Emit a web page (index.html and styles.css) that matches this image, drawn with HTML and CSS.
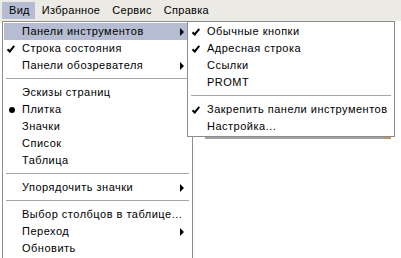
FILE: index.html
```html
<!DOCTYPE html>
<html lang="ru">
<head>
    <meta charset="UTF-8">
    <title>Вид</title>
    <link rel="stylesheet" href="styles.css">
</head>
<body>
    <div id="menubar">
        <span class="top-item active">Вид</span>
        <span class="top-item">Избранное</span>
        <span class="top-item">Сервис</span>
        <span class="top-item">Справка</span>
    </div>

    <div id="content">
        <div class="toolbar-edge"><span class="grip"></span></div>
    </div>

    <div class="menu" id="viewMenu">
        <div class="item hover">Панели инструментов<span class="arrow"></span></div>
        <div class="item"><span class="check"></span>Строка состояния</div>
        <div class="item">Панели обозревателя<span class="arrow"></span></div>
        <div class="sep"></div>
        <div class="item">Эскизы страниц</div>
        <div class="item"><span class="dot"></span>Плитка</div>
        <div class="item">Значки</div>
        <div class="item">Список</div>
        <div class="item">Таблица</div>
        <div class="sep"></div>
        <div class="item">Упорядочить значки<span class="arrow"></span></div>
        <div class="sep"></div>
        <div class="item">Выбор столбцов в таблице...</div>
        <div class="item">Переход<span class="arrow"></span></div>
        <div class="item">Обновить</div>
    </div>

    <div class="menu" id="toolbarsMenu">
        <div class="item"><span class="check"></span>Обычные кнопки</div>
        <div class="item"><span class="check"></span>Адресная строка</div>
        <div class="item">Ссылки</div>
        <div class="item">PROMT</div>
        <div class="sep"></div>
        <div class="item"><span class="check"></span>Закрепить панели инструментов</div>
        <div class="item">Настройка...</div>
    </div>
</body>
</html>
```

FILE: styles.css
```css
body {
    margin: 0;
    background-color: #ffffff;
    font-family: Tahoma, "Liberation Sans", Arial, sans-serif;
    font-size: 11px;
    letter-spacing: 0.5px;
    color: #000;
    width: 401px;
    height: 258px;
    overflow: hidden;
    position: relative;
}
#menubar {
    height: 21px;
    background-color: #ebeae4;
    display: flex;
    align-items: flex-start;
    padding-left: 2px;
    box-sizing: border-box;
    letter-spacing: 0.3px;
}
.top-item {
    height: 17px;
    line-height: 17px;
    margin-top: 2px;
    padding: 0 5px 0 7px;
}
.top-item.active {
    background-color: #b6bdd2;
}
#content {
    padding-top: 116px;
    padding-left: 205px;
}
.toolbar-edge {
    width: 180px;
    height: 2px;
    background-color: #a0a0a0;
    position: relative;
}
.grip {
    position: absolute;
    left: 180px;
    top: 0;
    width: 6px;
    height: 2px;
    background-color: #b0a060;
}
.menu {
    position: absolute;
    background-color: #ffffff;
    border: 1px solid #8d8d8d;
    padding: 1px;
}
#viewMenu {
    left: 2px;
    top: 21px;
    width: 187px;
}
#toolbarsMenu {
    left: 187px;
    top: 21px;
    width: 204px;
}
.item {
    height: 17px;
    line-height: 17px;
    padding-left: 18px;
    position: relative;
    white-space: nowrap;
}
.item.hover {
    background-color: #b6bdd2;
}
.sep {
    height: 1px;
    margin: 4px 2px 5px 2px;
    background-color: #a6a6a6;
}
.arrow {
    position: absolute;
    right: 7px;
    top: 5px;
    width: 0;
    height: 0;
    border-top: 4px solid transparent;
    border-bottom: 4px solid transparent;
    border-left: 4px solid #000;
}
.check {
    position: absolute;
    left: 8px;
    top: 4px;
    width: 2px;
    height: 6px;
    border-right: 2px solid #000;
    border-bottom: 2px solid #000;
    transform: rotate(40deg);
    transform-origin: 0 0;
}
.dot {
    position: absolute;
    left: 5px;
    top: 6px;
    width: 6px;
    height: 6px;
    border-radius: 50%;
    background-color: #000;
}
```
